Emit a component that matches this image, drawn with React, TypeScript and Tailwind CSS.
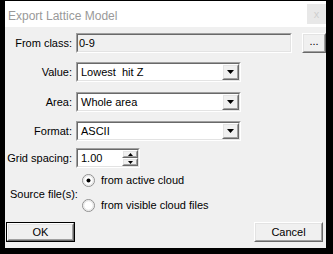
import React from 'react';

const font = { fontFamily: '"Liberation Sans", Arial, sans-serif' };

const Sunken: React.FC<{ className?: string; children?: React.ReactNode }> = ({ className = '', children }) => (
  <div className={`border border-t-[#a0a0a0] border-l-[#a0a0a0] border-r-[#ffffff] border-b-[#ffffff] ${className}`}>
    <div className="h-full w-full border border-t-[#696969] border-l-[#696969] border-r-[#e3e3e3] border-b-[#e3e3e3] flex items-stretch">
      {children}
    </div>
  </div>
);

const Raised: React.FC<{ className?: string; children?: React.ReactNode }> = ({ className = '', children }) => (
  <div className={`border border-t-[#ffffff] border-l-[#ffffff] border-r-[#696969] border-b-[#696969] bg-[#f0f0f0] ${className}`}>
    <div className="h-full w-full border border-t-[#e3e3e3] border-l-[#e3e3e3] border-r-[#a0a0a0] border-b-[#a0a0a0] flex items-center justify-center">
      {children}
    </div>
  </div>
);

const Select: React.FC<{ value: string }> = ({ value }) => (
  <Sunken className="w-[165px] h-[20px]">
    <div className="flex-1 bg-white pl-[3px] flex items-center whitespace-pre text-[11px]">{value}</div>
    <Raised className="w-[17px] h-full">
      <svg width="7" height="4" viewBox="0 0 7 4">
        <path d="M0 0h7L3.5 4z" fill="#000" />
      </svg>
    </Raised>
  </Sunken>
);

const Radio: React.FC<{ checked?: boolean }> = ({ checked }) => (
  <svg width="13" height="13" viewBox="0 0 13 13">
    <circle cx="6.5" cy="6.5" r="6" fill="#ffffff" stroke="#8f8f8f" />
    <circle cx="6.5" cy="6.5" r="4.8" fill="none" stroke="#dcdcdc" />
    {checked && <circle cx="6.5" cy="6.5" r="2" fill="#000" />}
  </svg>
);

const Label: React.FC<{ children: React.ReactNode }> = ({ children }) => (
  <div className="w-[68px] text-right pr-[1px] text-[11px] whitespace-nowrap shrink-0">{children}</div>
);

export default function App() {
  return (
    <div className="w-[333px] h-[254px] bg-black pt-[1px] pl-[5px] pr-[7px] pb-[6px] flex flex-col text-black" style={font}>
      <div className="h-[26px] bg-white flex justify-between shrink-0">
        <div className="pl-[3px] pt-[6px] text-[12px] text-[#999999]">Export Lattice Model</div>
        <div className="mt-[3px] w-[19px] h-[20px] bg-[#e8e8e8] flex items-center justify-center text-[11px] text-[#cfcfcf]">x</div>
      </div>

      <div className="flex-1 bg-[#f0f0f0] flex flex-col pt-[6px]">
        <div className="flex items-center gap-[3px]">
          <Label>From class:</Label>
          <Sunken className="w-[218px] h-[20px]">
            <div className="flex-1 bg-[#f0f0f0] pl-[1px] flex items-center text-[11px]">0-9</div>
          </Sunken>
          <Raised className="ml-[7px] w-[24px] h-[20px]">
            <span className="text-[11px] leading-none -mt-[3px]">...</span>
          </Raised>
        </div>

        <div className="flex items-center gap-[3px] mt-[9px]">
          <Label>Value:</Label>
          <Select value="Lowest  hit Z" />
        </div>

        <div className="flex items-center gap-[3px] mt-[10px]">
          <Label>Area:</Label>
          <Select value="Whole area" />
        </div>

        <div className="flex items-center gap-[3px] mt-[9px]">
          <Label>Format:</Label>
          <Select value="ASCII" />
        </div>

        <div className="flex items-center gap-[3px] mt-[7px]">
          <Label>Grid spacing:</Label>
          <Sunken className="w-[64px] h-[20px]">
            <div className="flex-1 bg-white pl-[3px] flex items-center text-[11px]">1.00</div>
            <div className="w-[16px] flex flex-col">
              <Raised className="flex-1">
                <svg width="5" height="3" viewBox="0 0 5 3">
                  <path d="M2.5 0L5 3H0z" fill="#000" />
                </svg>
              </Raised>
              <Raised className="flex-1">
                <svg width="5" height="3" viewBox="0 0 5 3">
                  <path d="M0 0h5L2.5 3z" fill="#000" />
                </svg>
              </Raised>
            </div>
          </Sunken>
        </div>

        <div className="flex mt-[5px]">
          <div className="w-[72px] shrink-0 flex items-center pl-[5px] pt-[3px] text-[11px] whitespace-nowrap">Source file(s):</div>
          <div className="flex flex-col gap-[11px] pl-[5px]">
            <div className="flex items-center gap-[6px] h-[14px] text-[11px]">
              <Radio checked />
              <span>from active cloud</span>
            </div>
            <div className="flex items-center gap-[6px] h-[14px] text-[11px]">
              <Radio />
              <span>from visible cloud files</span>
            </div>
          </div>
        </div>

        <div className="flex justify-between mt-[10px] pl-[1px] pr-[3px]">
          <div className="w-[69px] h-[20px] border border-black">
            <Raised className="w-full h-full">
              <span className="text-[11px]">OK</span>
            </Raised>
          </div>
          <Raised className="w-[69px] h-[20px]">
            <span className="text-[11px]">Cancel</span>
          </Raised>
        </div>
      </div>
    </div>
  );
}
